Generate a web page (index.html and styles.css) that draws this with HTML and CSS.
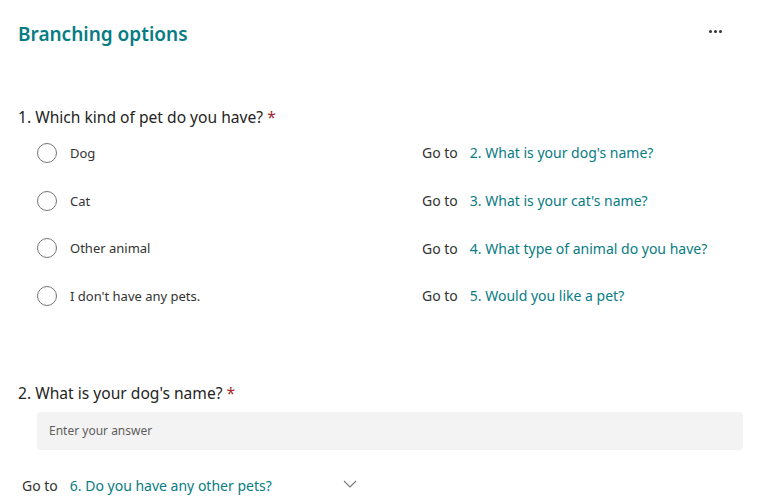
FILE: index.html
```html
<!DOCTYPE html>
<html>
<head>
<meta charset="utf-8">
<link rel="stylesheet" href="styles.css">
</head>
<body>
<div class="page">
  <header class="header">
    <h1 class="title">Branching options</h1>
    <div class="more" aria-label="More options"><span></span><span></span><span></span></div>
  </header>

  <section class="question q1">
    <div class="qtitle">1. Which kind of pet do you have? <span class="req">*</span></div>
    <div class="options">
      <div class="row">
        <div class="choice"><span class="radio"></span><span class="label">Dog</span></div>
        <div class="goto"><span class="goto-l">Go to</span><span class="goto-t">2. What is your dog's name?</span></div>
      </div>
      <div class="row">
        <div class="choice"><span class="radio"></span><span class="label">Cat</span></div>
        <div class="goto"><span class="goto-l">Go to</span><span class="goto-t">3. What is your cat's name?</span></div>
      </div>
      <div class="row">
        <div class="choice"><span class="radio"></span><span class="label">Other animal</span></div>
        <div class="goto"><span class="goto-l">Go to</span><span class="goto-t">4. What type of animal do you have?</span></div>
      </div>
      <div class="row">
        <div class="choice"><span class="radio"></span><span class="label">I don't have any pets.</span></div>
        <div class="goto"><span class="goto-l">Go to</span><span class="goto-t">5. Would you like a pet?</span></div>
      </div>
    </div>
  </section>

  <section class="question q2">
    <div class="qtitle">2. What is your dog's name? <span class="req">*</span></div>
    <div class="answer">Enter your answer</div>
    <div class="goto goto-bottom">
      <span class="goto-l">Go to</span><span class="goto-t">6. Do you have any other pets?</span>
      <svg class="chev" width="14" height="8" viewBox="0 0 14 8"><path d="M1 1 L7 7 L13 1" fill="none" stroke="#777" stroke-width="1.1"/></svg>
    </div>
  </section>
</div>
</body>
</html>
```

FILE: styles.css
```css
* { box-sizing: border-box; }
html, body { margin: 0; padding: 0; background: #fff; }
body {
  font-family: "Noto Sans", "Open Sans", "Liberation Sans", sans-serif;
  color: #242424;
  width: 759px;
  height: 500px;
  overflow: hidden;
}
.page { padding: 0 0 0 18px; }
.header {
  display: flex;
  align-items: flex-start;
  justify-content: space-between;
  padding: 20px 37px 0 0;
  height: 106px;
}
.title {
  margin: 0;
  font-size: 19px;
  font-weight: 600;
  color: #077c83;
  line-height: 28px;
}
.more {
  display: flex;
  gap: 2px;
  margin-top: 10px;
}
.more span {
  width: 3px; height: 3px; background: #333; border-radius: 50%;
}
.qtitle {
  font-size: 15.6px;
  line-height: 22px;
  color: #242424;
}
.req { color: #a4262c; }
.options { padding-top: 1px; }
.row {
  display: flex;
  align-items: center;
  height: 47.7px;
}
.choice {
  display: flex;
  align-items: center;
  width: 404px;
  padding-left: 19px;
}
.radio {
  width: 20px; height: 20px;
  border: 1.5px solid #767676;
  border-radius: 50%;
  margin-right: 13px;
  flex: none;
}
.label { font-size: 13px; color: #333; }
.goto { display: flex; align-items: center; font-size: 14px; }
.goto-l { color: #333; margin-right: 12px; }
.goto-t { color: #077c83; }
.q2 { margin-top: 62px; }
.answer {
  margin: 8px 16px 0 19px;
  height: 38px;
  background: #f3f3f3;
  border-radius: 4px;
  font-size: 12px;
  color: #605e5c;
  padding-left: 12px;
  display: flex;
  align-items: center;
}
.goto-bottom { margin-top: 26px; padding-left: 4px; }
.chev { margin-left: 71px; margin-top: -3px; }
```
